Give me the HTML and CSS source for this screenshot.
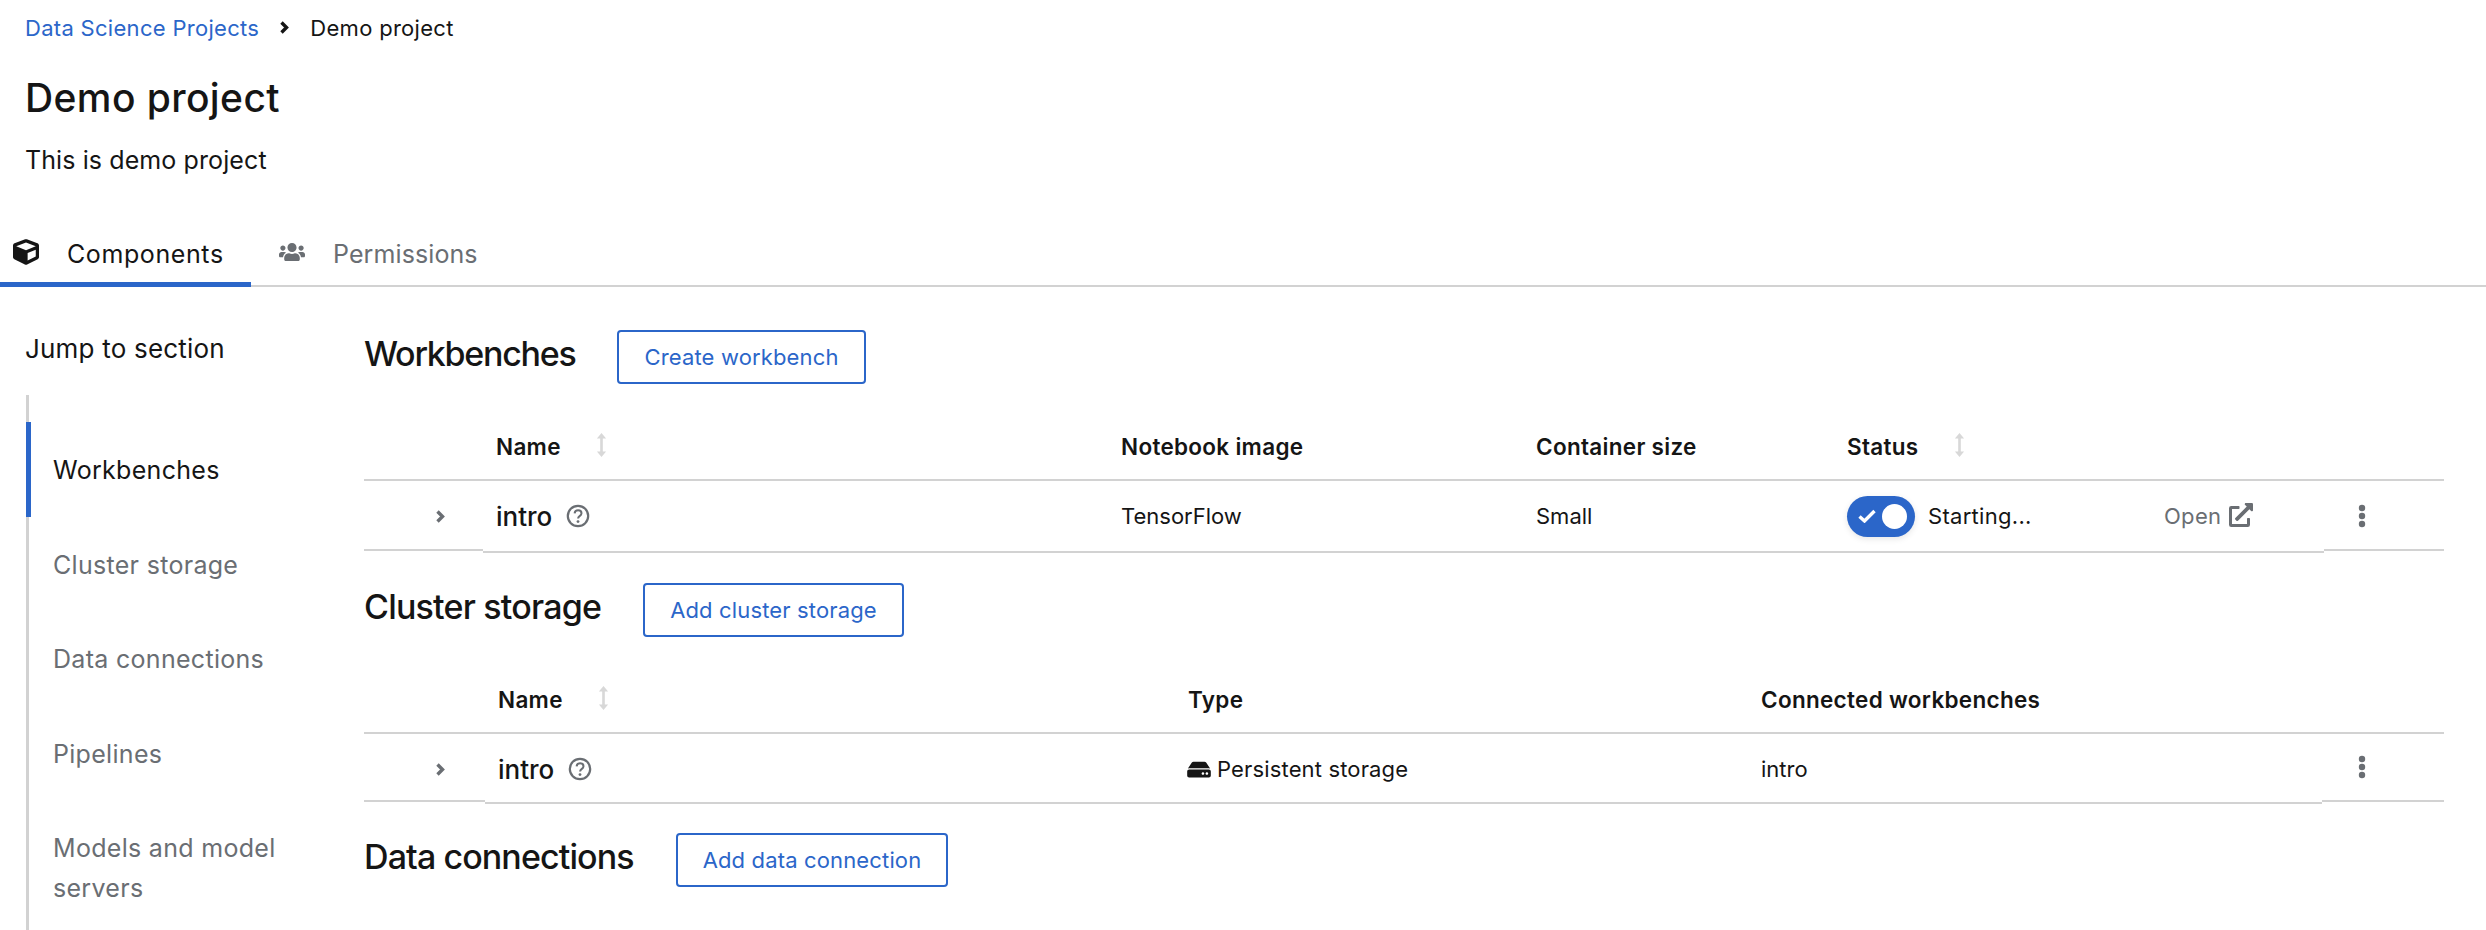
FILE: index.html
```html
<!DOCTYPE html>
<html lang="en">
<head>
<meta charset="utf-8">
<title>Demo project</title>
<link rel="stylesheet" href="styles.css">
</head>
<body>
<svg class="defs" aria-hidden="true">
  <symbol id="i-angle" viewBox="0 0 11 13"><path d="M2.500 1.500 7.500 6.500l-5 5" fill="none" stroke="currentColor" stroke-width="3.400"/></symbol>
  <symbol id="i-sort" viewBox="0 0 10 24"><path d="M5 0 9.600 5.400H6.300v13.200h3.300L5 24 .4 18.600h3.300V5.400H.4z" fill="currentColor"/></symbol>
  <symbol id="i-help" viewBox="0 0 24 24"><circle cx="12" cy="12" r="10.200" fill="none" stroke="currentColor" stroke-width="2.200"/><path d="M8.600 9.400c.2-2.100 1.600-3.200 3.500-3.200 2 0 3.400 1.200 3.400 3 0 1.500-.9 2.200-1.900 2.900-1 .7-1.500 1.200-1.500 2.500" fill="none" stroke="currentColor" stroke-width="2"/><circle cx="12" cy="17.600" r="1.400" fill="currentColor"/></symbol>
  <symbol id="i-kebab" viewBox="0 0 8 24"><circle cx="4" cy="4" r="3.200" fill="currentColor"/><circle cx="4" cy="12" r="3.200" fill="currentColor"/><circle cx="4" cy="20" r="3.200" fill="currentColor"/></symbol>
</svg>

<nav class="crumbs">
  <a class="crumb-link" href="#">Data Science Projects</a>
  <svg class="crumb-sep"><use href="#i-angle"/></svg>
  <span class="crumb-current">Demo project</span>
</nav>

<header class="page-head">
  <h1 class="page-title">Demo project</h1>
  <p class="page-desc">This is demo project</p>
</header>

<div class="tabs">
  <a class="tab tab-active" href="#">
    <svg class="tab-icon" viewBox="0 0 512 512"><path fill="currentColor" d="M239.1 6.300l-208 78c-18.700 7-31.100 25-31.100 45v225.100c0 18.200 10.300 34.800 26.500 42.900l208 104c13.500 6.800 29.400 6.800 42.900 0l208-104c16.300-8.100 26.500-24.800 26.500-42.900V129.300c0-20-12.400-37.900-31.100-44.900l-208-78C262 2.200 250 2.200 239.100 6.300zM256 68.400l192 72v1.100l-192 78-192-78v-1.100l192-72zm32 356V275.500l160-65v133.900l-160 80z"/></svg>
    <span>Components</span>
  </a>
  <a class="tab" href="#">
    <svg class="tab-icon tab-icon-users" viewBox="0 0 640 512"><path fill="currentColor" d="M96 224c35.300 0 64-28.700 64-64s-28.700-64-64-64-64 28.700-64 64 28.700 64 64 64zm448 0c35.300 0 64-28.700 64-64s-28.700-64-64-64-64 28.700-64 64 28.700 64 64 64zm32 32h-64c-17.600 0-33.500 7.100-45.100 18.600 40.300 22.100 68.900 62 75.100 109.400h66c17.700 0 32-14.300 32-32v-32c0-35.300-28.700-64-64-64zm-256 0c61.900 0 112-50.100 112-112S381.900 32 320 32 208 82.100 208 144s50.100 112 112 112zm76.800 32h-8.300c-20.800 10-43.900 16-68.500 16s-47.600-6-68.500-16h-8.300C179.600 288 128 339.600 128 403.200V432c0 26.500 21.500 48 48 48h288c26.500 0 48-21.500 48-48v-28.800c0-63.600-51.600-115.200-115.200-115.200zm-223.700-13.400C161.500 263.100 145.600 256 128 256H64c-35.300 0-64 28.700-64 64v32c0 17.700 14.300 32 32 32h65.900c6.300-47.400 34.900-87.300 75.200-109.400z"/></svg>
    <span>Permissions</span>
  </a>
</div>

<div class="layout">
  <aside class="jump">
    <div class="jump-title">Jump to section</div>
    <ul class="jump-list">
      <li class="jump-item jump-item-active"><a href="#">Workbenches</a></li>
      <li class="jump-item"><a href="#">Cluster storage</a></li>
      <li class="jump-item"><a href="#">Data connections</a></li>
      <li class="jump-item"><a href="#">Pipelines</a></li>
      <li class="jump-item"><a href="#">Models and model servers</a></li>
    </ul>
  </aside>

  <main class="content">
    <section class="section section-workbenches">
      <div class="section-head">
        <h2 class="section-title title-wb">Workbenches</h2>
        <button class="btn" type="button">Create workbench</button>
      </div>
      <div class="grid grid-wb grid-header">
        <div class="th th-first"></div>
        <div class="th th-name">Name<svg class="sort"><use href="#i-sort"/></svg></div>
        <div class="th">Notebook image</div>
        <div class="th">Container size</div>
        <div class="th">Status<svg class="sort"><use href="#i-sort"/></svg></div>
        <div class="th"></div>
        <div class="th"></div>
      </div>
      <div class="grid grid-wb grid-row">
        <div class="td td-edge td-expand"><svg class="expand"><use href="#i-angle"/></svg></div>
        <div class="td td-name">intro<svg class="help"><use href="#i-help"/></svg></div>
        <div class="td">TensorFlow</div>
        <div class="td">Small</div>
        <div class="td td-status">
          <span class="switch">
            <svg class="switch-check" viewBox="0 0 18 14"><path d="M1.500 7.500 6.500 12 16.500 2" fill="none" stroke="currentColor" stroke-width="3.400"/></svg>
            <span class="switch-knob"></span>
          </span>
          <span class="status-text">Starting...</span>
        </div>
        <div class="td td-open">Open
          <svg class="ext" viewBox="0 0 512 512"><path fill="currentColor" d="M432,320H400a16,16,0,0,0-16,16V448H64V128H208a16,16,0,0,0,16-16V80a16,16,0,0,0-16-16H48A48,48,0,0,0,0,112V464a48,48,0,0,0,48,48H400a48,48,0,0,0,48-48V336A16,16,0,0,0,432,320ZM488,0h-128c-21.370,0-32.050,25.910-17,41l35.730,35.730L135,320.370a24,24,0,0,0,0,34L157.670,377a24,24,0,0,0,34,0L435.280,133.320,471,169c15,15,41,4.500,41-17V24A24,24,0,0,0,488,0Z"/></svg>
        </div>
        <div class="td td-edge td-kebab"><svg class="kebab"><use href="#i-kebab"/></svg></div>
      </div>
    </section>

    <section class="section section-storage">
      <div class="section-head">
        <h2 class="section-title title-st">Cluster storage</h2>
        <button class="btn" type="button">Add cluster storage</button>
      </div>
      <div class="grid grid-st grid-header">
        <div class="th th-first"></div>
        <div class="th th-name">Name<svg class="sort"><use href="#i-sort"/></svg></div>
        <div class="th">Type</div>
        <div class="th">Connected workbenches</div>
        <div class="th"></div>
      </div>
      <div class="grid grid-st grid-row grid-row-st">
        <div class="td td-edge td-expand"><svg class="expand"><use href="#i-angle"/></svg></div>
        <div class="td td-name">intro<svg class="help"><use href="#i-help"/></svg></div>
        <div class="td td-type">
          <svg class="hdd" viewBox="0 0 576 512"><path fill="currentColor" d="M576 304v96c0 26.510-21.490 48-48 48H48c-26.510 0-48-21.490-48-48v-96c0-26.510 21.490-48 48-48h480c26.510 0 48 21.490 48 48zm-48-80a79.557 79.557 0 0 1 30.777 6.165L462.250 85.374A48.003 48.003 0 0 0 422.311 64H153.689a48 48 0 0 0-39.938 21.374L17.223 230.165A79.557 79.557 0 0 1 48 224h480zm-48 96c-17.673 0-32 14.327-32 32s14.327 32 32 32 32-14.327 32-32-14.327-32-32-32zm-96 0c-17.673 0-32 14.327-32 32s14.327 32 32 32 32-14.327 32-32-14.327-32-32-32z"/></svg>
          <span>Persistent storage</span>
        </div>
        <div class="td">intro</div>
        <div class="td td-edge td-kebab td-kebab-st"><svg class="kebab"><use href="#i-kebab"/></svg></div>
      </div>
    </section>

    <section class="section section-data">
      <div class="section-head">
        <h2 class="section-title title-dc">Data connections</h2>
        <button class="btn" type="button">Add data connection</button>
      </div>
    </section>
  </main>
</div>
</body>
</html>
```

FILE: styles.css
```css
* { box-sizing: border-box; }
html, body { height: 100%; }
body {
  margin: 0;
  background: #fff;
  color: #151515;
  font-family: Inter, "Liberation Sans", sans-serif;
  font-size: 22px;
  overflow: hidden;
}
a { color: inherit; text-decoration: none; }
.defs { display: none; }

.crumbs {
  display: flex;
  align-items: center;
  height: 31px;
  margin: 12px 0 0 25px;
  letter-spacing: 0.3px;
}
.crumb-link { color: #2b66c9; }
.crumb-sep { width: 11px; height: 13px; margin: 0 20px; color: #151515; }

.page-head { padding: 0 25px; }
.page-title {
  margin: 33px 0 0;
  font-size: 39px;
  font-weight: 500;
  line-height: 44px;
  letter-spacing: 0.4px;
}
.page-desc { margin: 23px 0 0; font-size: 25px; line-height: 34px; letter-spacing: 0.1px; }

.tabs {
  display: flex;
  height: 58px;
  margin-top: 52px;
  border-bottom: 2px solid #d2d2d2;
}
.tab {
  position: relative;
  display: flex;
  align-items: center;
  gap: 28px;
  height: 58px;
  padding: 0 23px 9px 28px;
  font-size: 25px;
  color: #6a6e73;
  letter-spacing: 0.1px;
}
.tab-active {
  width: 251px;
  padding: 0 0 9px 13px;
  color: #151515;
  letter-spacing: 0.6px;
}
.tab-active::after {
  content: "";
  position: absolute;
  left: 0;
  bottom: 0;
  width: 251px;
  height: 5px;
  background: #2b66c9;
}
.tab-icon { width: 26px; height: 28px; margin-top: -3px; }
.tab-icon-users { height: 24px; }

.layout { display: flex; }
.jump { width: 364px; flex: none; padding: 46px 0 0 25px; }
.jump-title { font-size: 26px; line-height: 32px; letter-spacing: 0.2px; }
.jump-list {
  list-style: none;
  width: 300px;
  height: 600px;
  margin: 30px 0 0 1px;
  padding: 27px 20px 0 0;
  border-left: 3px solid #d2d2d2;
}
.jump-item {
  position: relative;
  width: 270px;
  margin-left: -3px;
  padding: 28px 0 26.5px 27px;
  font-size: 25px;
  line-height: 40px;
  letter-spacing: 0.3px;
  color: #6a6e73;
}
.jump-item-active { color: #151515; }
.jump-item-active::before {
  content: "";
  position: absolute;
  left: 0;
  top: 0;
  bottom: 0;
  width: 5px;
  background: #2b66c9;
}

.content { flex: none; width: 2080px; }
.section-workbenches { padding-top: 43px; }
.section-storage { padding-top: 30px; }
.section-data { padding-top: 29px; }
.section-head { display: flex; align-items: center; height: 54px; }
.section-title {
  margin: -8px 42px 0 0;
  font-size: 34px;
  font-weight: 500;
  letter-spacing: -1px;
}
.title-wb { letter-spacing: -1.27px; }
.title-st { letter-spacing: -0.8px; }
.title-dc { letter-spacing: -0.9px; }
.btn {
  height: 54px;
  padding: 0 25px;
  border: 2px solid #2b66c9;
  border-radius: 4px;
  background: #fff;
  color: #2b66c9;
  font: inherit;
  letter-spacing: 0.15px;
}

.grid { display: grid; }
.grid-wb { grid-template-columns: 119px 625px 415px 311px 317px 173px 120px; }
.grid-st { grid-template-columns: 121px 690px 573px 574px 122px; }

.grid-header { height: 97px; }
.th {
  display: flex;
  align-items: center;
  padding: 30px 0 0 13px;
  border-bottom: 2px solid #d2d2d2;
  font-size: 22.5px;
  font-weight: 600;
  letter-spacing: 0.3px;
}
.th-first { padding: 0; }
.sort { width: 11px; height: 24px; margin: -4px 0 0 35px; color: #d8d8d8; }

.grid-row { height: 72px; }
.grid-row-st { height: 70px; }
.td {
  display: flex;
  align-items: center;
  padding-left: 13px;
  border-bottom: 2px solid #d2d2d2;
}
.grid-row-st .td { padding-top: 2px; }
.td-edge { padding-left: 0; margin-bottom: 2px; }
.td-expand { padding: 3px 0 0 71px; }
.grid-row-st .td-expand { padding: 5px 0 0 71px; }
.expand { width: 11px; height: 13px; color: #6a6e73; }
.td-name { font-size: 26px; font-weight: 500; }
.help { width: 24px; height: 24px; margin-left: 14px; color: #6a6e73; }
.td-status { gap: 13px; }
.status-text { letter-spacing: 0.3px; }
.switch {
  display: flex;
  align-items: center;
  justify-content: space-between;
  width: 68px;
  height: 41px;
  padding: 0 8px 0 11px;
  border-radius: 21px;
  background: #2b66c9;
  box-shadow: 0 2px 6px rgba(3, 3, 3, 0.1);
}
.switch-check { width: 18px; height: 14px; color: #fff; }
.switch-knob { width: 25px; height: 25px; border-radius: 50%; background: #fff; }
.td-open { gap: 8px; color: #6a6e73; letter-spacing: 0.3px; }
.ext { width: 24px; height: 24px; margin-top: -3px; }
.td-kebab { padding: 1px 0 0 34px; }
.kebab { width: 8px; height: 24px; color: #6a6e73; }
.td-type { gap: 6px; padding-left: 12px; letter-spacing: 0.15px; }
.hdd { width: 24px; height: 21px; }
.grid-row-st .td-kebab-st { align-items: flex-start; padding: 21px 0 0 36px; }
```
